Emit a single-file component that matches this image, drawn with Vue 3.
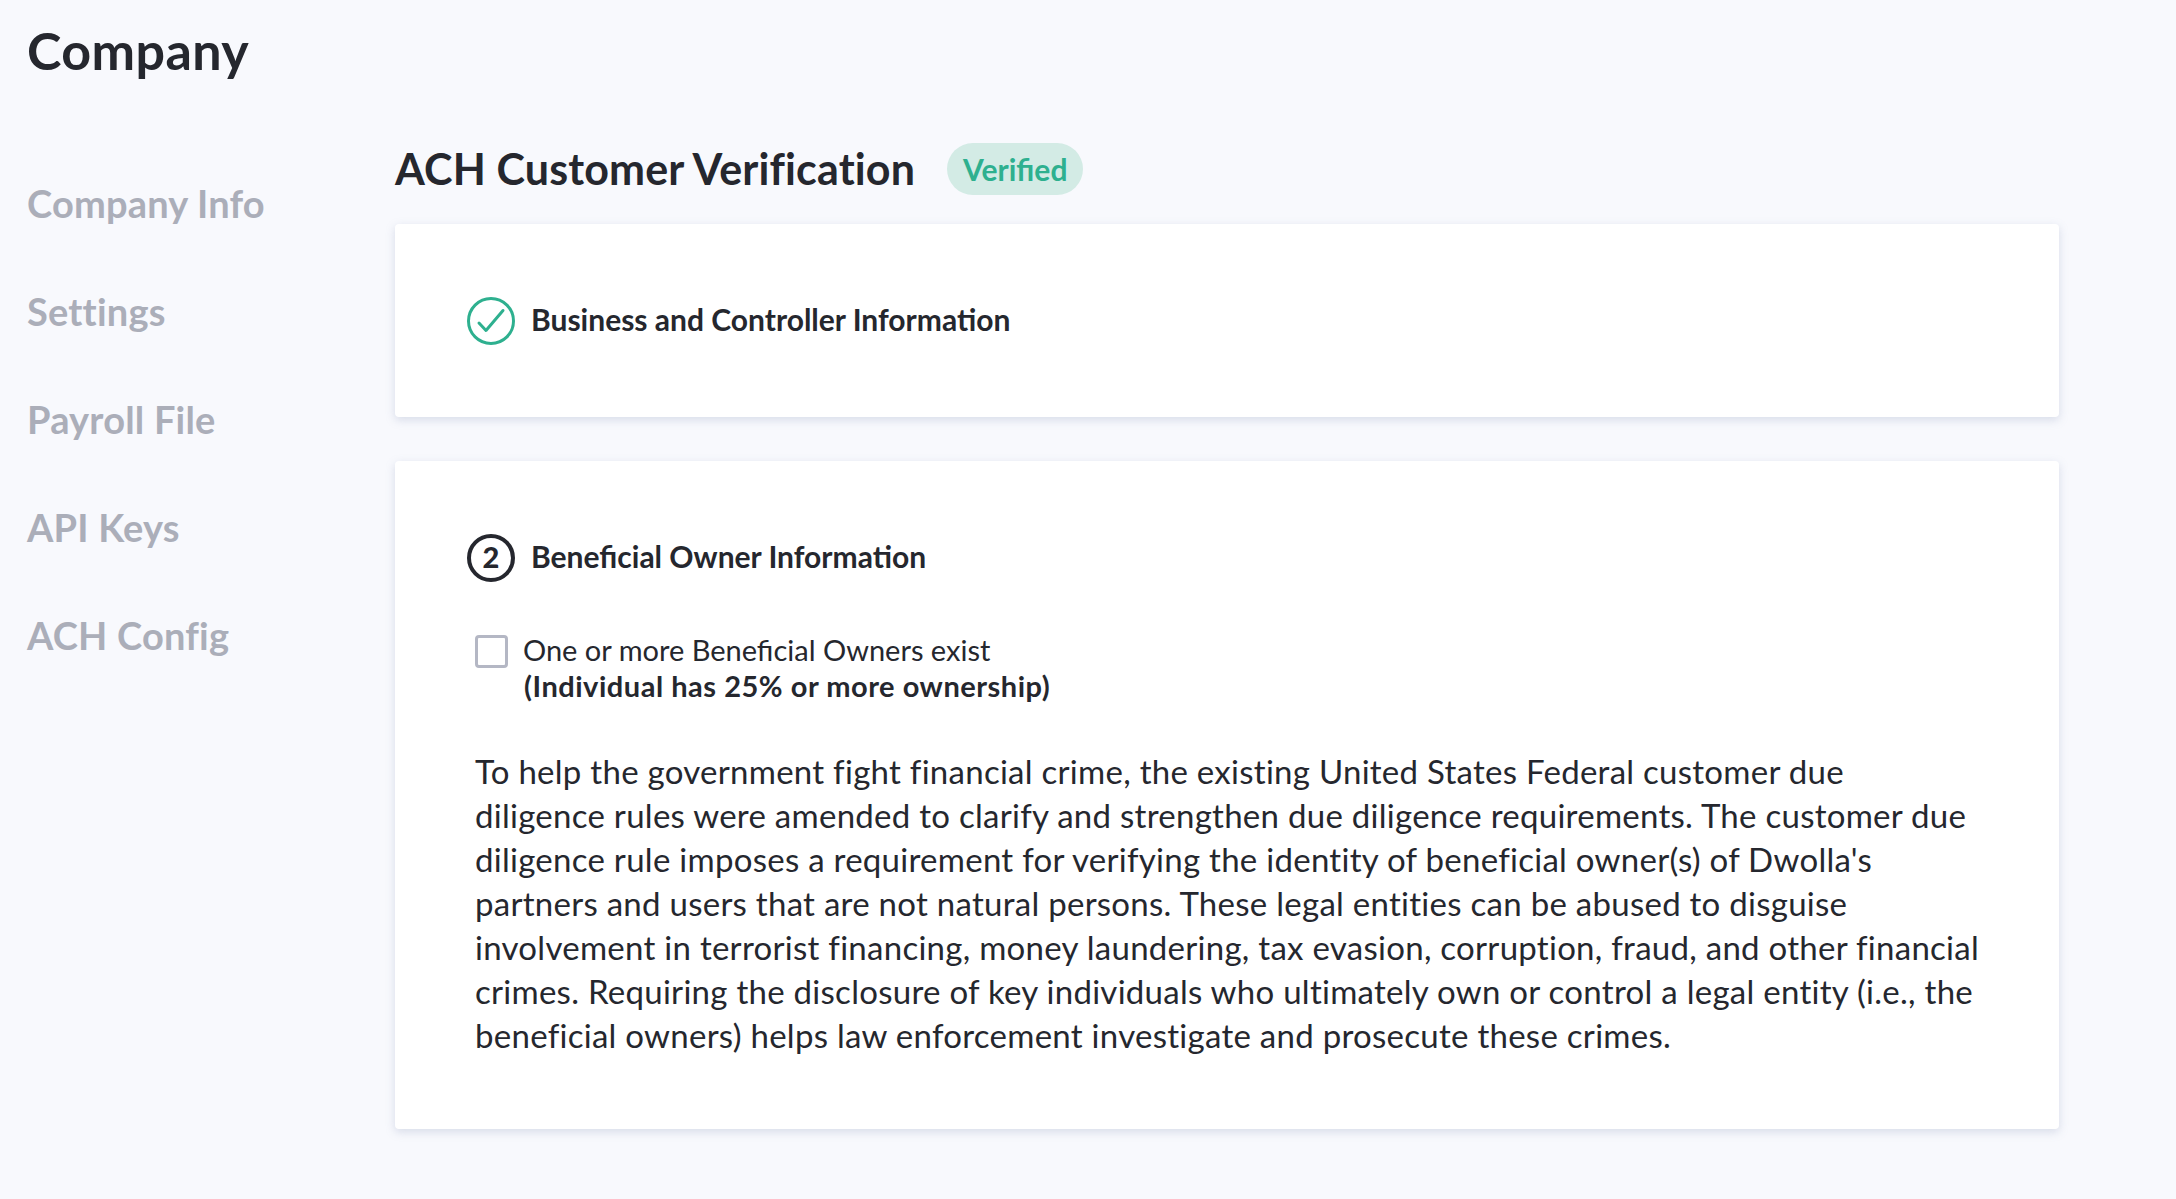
<script setup>
const nav = ['Company Info', 'Settings', 'Payroll File', 'API Keys', 'ACH Config']
const lines = [
  'To help the government fight financial crime, the existing United States Federal customer due',
  'diligence rules were amended to clarify and strengthen due diligence requirements. The customer due',
  "diligence rule imposes a requirement for verifying the identity of beneficial owner(s) of Dwolla's",
  'partners and users that are not natural persons. These legal entities can be abused to disguise',
  'involvement in terrorist financing, money laundering, tax evasion, corruption, fraud, and other financial',
  'crimes. Requiring the disclosure of key individuals who ultimately own or control a legal entity (i.e., the',
  'beneficial owners) helps law enforcement investigate and prosecute these crimes.'
]
</script>

<template>
  <div class="page">
    <h1 class="title">Company</h1>
    <div class="body">
      <nav class="nav">
        <a v-for="n in nav" :key="n" class="nav-item">{{ n }}</a>
      </nav>
      <main class="main">
        <div class="head">
          <h2 class="h2">ACH Customer Verification</h2>
          <span class="badge">Verified</span>
        </div>
        <section class="card card-one">
          <div class="step">
            <svg class="step-icon" viewBox="0 0 48 48" fill="none">
              <circle cx="24" cy="24" r="22.5" stroke="#2eb08f" stroke-width="3" />
              <path d="M12 26 L19 33.5 L36 13.5" stroke="#2eb08f" stroke-width="3" stroke-linecap="round" stroke-linejoin="round" />
            </svg>
            <span class="step-title">Business and Controller Information</span>
          </div>
        </section>
        <section class="card card-two">
          <div class="step">
            <span class="step-num">2</span>
            <span class="step-title">Beneficial Owner Information</span>
          </div>
          <div class="check">
            <span class="box"></span>
            <div class="check-text">
              <div>One or more Beneficial Owners exist</div>
              <div class="strong">(Individual has 25% or more ownership)</div>
            </div>
          </div>
          <p class="para"><span v-for="l in lines" :key="l" class="line">{{ l }}</span></p>
        </section>
      </main>
    </div>
  </div>
</template>

<style>
html, body { margin: 0; background: #f8f9fd; }
</style>

<style scoped>
.page {
  height: 1199px;
  overflow: hidden;
  box-sizing: border-box;
  background: #f8f9fd;
  padding: 23px 0 0 27px;
  font-family: Lato, "Open Sans", sans-serif;
  color: #25272e;
}
.title { margin: 0; font-size: 52px; line-height: 54px; font-weight: 700; letter-spacing: 0.4px; }
.body { display: flex; margin-top: 43px; }
.nav { width: 368px; flex: none; display: flex; flex-direction: column; gap: 68px; padding-top: 63px; }
.nav-item { font-size: 38px; line-height: 40px; font-weight: 700; letter-spacing: 0.2px; color: #abaeb9; }
.main { width: 1664px; flex: none; }
.head { display: flex; align-items: center; gap: 32px; height: 52px; margin-top: 23px; }
.h2 { margin: 0; font-size: 43px; line-height: 52px; font-weight: 700; letter-spacing: 0.14px; white-space: nowrap; }
.badge { height: 52px; line-height: 52px; padding: 0 16px; border-radius: 26px; background: #d3ebe5; color: #2eb08f; font-size: 30px; font-weight: 700; }
.card { background: #fff; border-radius: 4px; box-shadow: 0 3px 10px rgba(130, 145, 180, 0.28); box-sizing: border-box; padding: 73px 72px 0; }
.card-one { height: 193px; margin-top: 29px; }
.card-two { height: 668px; margin-top: 44px; }
.step { display: flex; align-items: center; gap: 16px; height: 48px; }
.step-icon { width: 48px; height: 48px; flex: none; }
.step-num { width: 48px; height: 48px; box-sizing: border-box; flex: none; border: 4px solid #25272e; border-radius: 50%; padding-bottom: 3px; display: flex; align-items: center; justify-content: center; font-size: 29px; font-weight: 900; }
.step-title { font-size: 30px; font-weight: 700; white-space: nowrap; margin-bottom: 4px; }
.check { display: flex; gap: 15px; margin: 50px 0 0 8px; }
.box { width: 33px; height: 33px; box-sizing: border-box; margin-top: 3px; flex: none; border: 3px solid #b4b7c4; border-radius: 4px; background: #fff; }
.check-text { font-size: 29px; line-height: 36px; white-space: nowrap; }
.strong { font-weight: 700; letter-spacing: 0.52px; margin-left: 1px; }
.para { margin: 45px 0 0 8px; font-size: 33px; line-height: 44px; letter-spacing: 0.27px; }
.line { display: block; white-space: nowrap; }
</style>
